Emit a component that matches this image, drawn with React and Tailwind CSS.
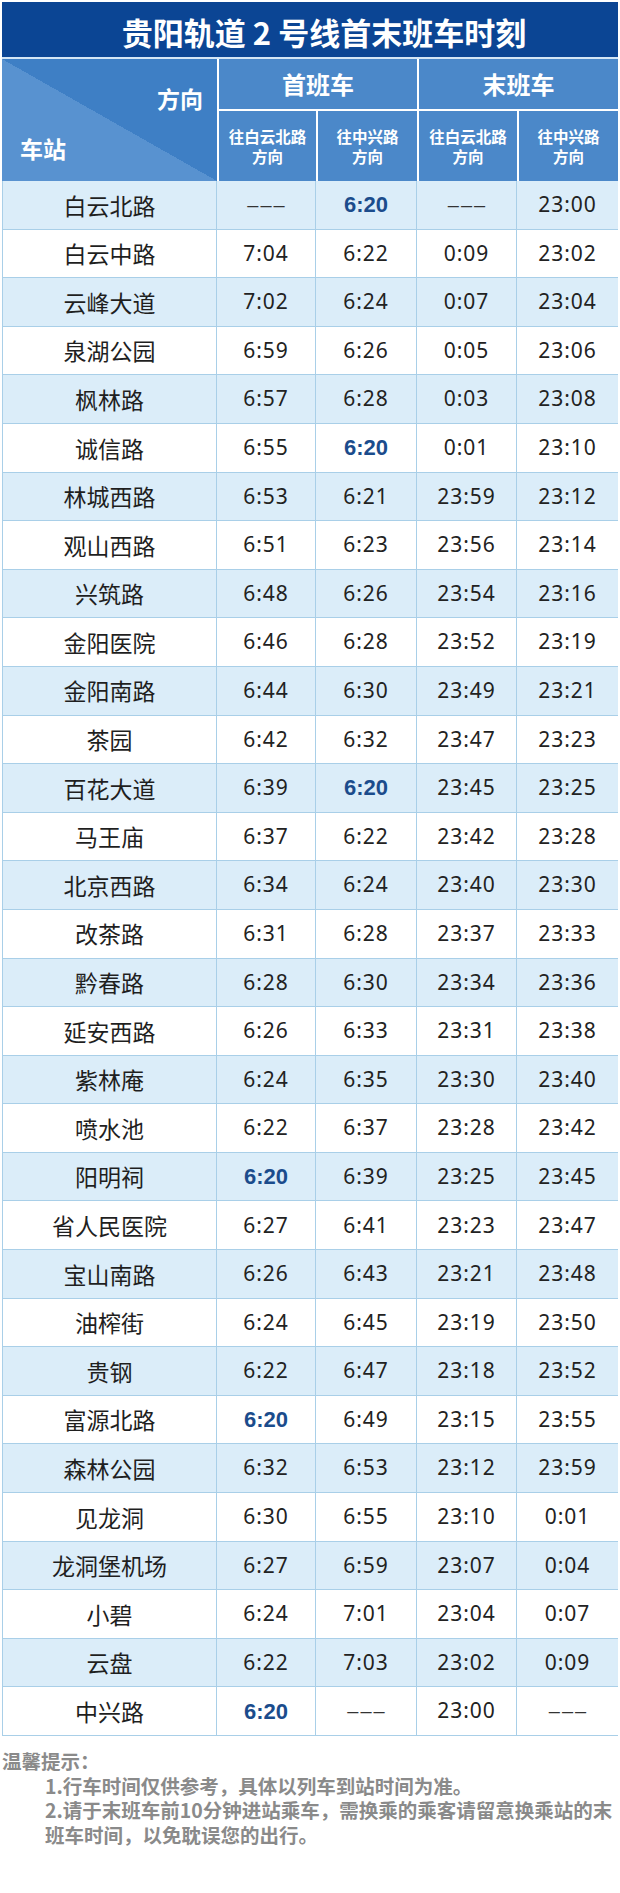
const rows = [
  ['白云北路', '---', '*6:20', '---', '23:00'],
  ['白云中路', '7:04', '6:22', '0:09', '23:02'],
  ['云峰大道', '7:02', '6:24', '0:07', '23:04'],
  ['泉湖公园', '6:59', '6:26', '0:05', '23:06'],
  ['枫林路', '6:57', '6:28', '0:03', '23:08'],
  ['诚信路', '6:55', '*6:20', '0:01', '23:10'],
  ['林城西路', '6:53', '6:21', '23:59', '23:12'],
  ['观山西路', '6:51', '6:23', '23:56', '23:14'],
  ['兴筑路', '6:48', '6:26', '23:54', '23:16'],
  ['金阳医院', '6:46', '6:28', '23:52', '23:19'],
  ['金阳南路', '6:44', '6:30', '23:49', '23:21'],
  ['茶园', '6:42', '6:32', '23:47', '23:23'],
  ['百花大道', '6:39', '*6:20', '23:45', '23:25'],
  ['马王庙', '6:37', '6:22', '23:42', '23:28'],
  ['北京西路', '6:34', '6:24', '23:40', '23:30'],
  ['改茶路', '6:31', '6:28', '23:37', '23:33'],
  ['黔春路', '6:28', '6:30', '23:34', '23:36'],
  ['延安西路', '6:26', '6:33', '23:31', '23:38'],
  ['紫林庵', '6:24', '6:35', '23:30', '23:40'],
  ['喷水池', '6:22', '6:37', '23:28', '23:42'],
  ['阳明祠', '*6:20', '6:39', '23:25', '23:45'],
  ['省人民医院', '6:27', '6:41', '23:23', '23:47'],
  ['宝山南路', '6:26', '6:43', '23:21', '23:48'],
  ['油榨街', '6:24', '6:45', '23:19', '23:50'],
  ['贵钢', '6:22', '6:47', '23:18', '23:52'],
  ['富源北路', '*6:20', '6:49', '23:15', '23:55'],
  ['森林公园', '6:32', '6:53', '23:12', '23:59'],
  ['见龙洞', '6:30', '6:55', '23:10', '0:01'],
  ['龙洞堡机场', '6:27', '6:59', '23:07', '0:04'],
  ['小碧', '6:24', '7:01', '23:04', '0:07'],
  ['云盘', '6:22', '7:03', '23:02', '0:09'],
  ['中兴路', '*6:20', '---', '23:00', '---'],
]

const TimeCell = ({ v, last }) => {
  const edge = last ? '' : 'border-r border-[#a9cfe8]'
  if (v === '---') {
    return (
      <div className={`flex items-center justify-center ${edge}`}>
        <span className="font-['Liberation_Sans',sans-serif] text-[20px] text-[#333] tracking-[2px] pl-[2px]">–––</span>
      </div>
    )
  }
  if (v.startsWith('*')) {
    return (
      <div className={`flex items-center justify-center ${edge}`}>
        <span className="font-['Liberation_Sans',sans-serif] font-bold text-[22px] text-[#1b4c8c]">{v.slice(1)}</span>
      </div>
    )
  }
  return (
    <div className={`flex items-center justify-center ${edge}`}>
      <span className="font-['Noto_Sans',sans-serif] text-[21px] tracking-[1px] text-[#222]">{v}</span>
    </div>
  )
}

const SubHead = ({ a }) => (
  <div className="bg-[#4b88c9] flex flex-col items-center justify-center text-white font-bold text-[15.5px] leading-[20px]">
    <span>{a}</span>
    <span>方向</span>
  </div>
)

export default function App() {
  return (
    <div className="w-[620px] bg-white pt-[2px] pb-[40px] font-['Noto_Sans_CJK_SC','Noto_Sans',sans-serif]">
      <div className="ml-[2px] w-[616px]">
        <div className="h-[55px] bg-[#0b4594] flex items-center justify-center pl-[28px] pt-[4px]">
          <h1 className="text-white font-bold text-[31px] leading-none">贵阳轨道 2 号线首末班车时刻</h1>
        </div>
        <div className="h-[2px] bg-[#d4e6f6]"></div>
        <div className="grid grid-cols-[215px_97px_99px_98px_99px] grid-rows-[50px_70px] gap-[2px] bg-white">
          <div className="row-span-2 flex flex-col justify-between pt-[24px] pb-[18px] px-[14px] bg-[linear-gradient(to_top_right,#5892d0_50%,#3e7fc5_50%)] text-white font-bold text-[23px] leading-[30px]">
            <span className="text-right">方向</span>
            <span className="text-left pl-[4px]">车站</span>
          </div>
          <div className="col-span-2 bg-[#4b88c9] flex items-center justify-center text-white font-bold text-[24px]">首班车</div>
          <div className="col-span-2 bg-[#4b88c9] flex items-center justify-center text-white font-bold text-[24px]">末班车</div>
          <SubHead a="往白云北路" />
          <SubHead a="往中兴路" />
          <SubHead a="往白云北路" />
          <SubHead a="往中兴路" />
        </div>
        <div className="border-l border-[#a9cfe8]">
          {rows.map((r, i) => (
            <div
              key={r[0]}
              className={`grid grid-cols-[214px_99px_101px_100px_101px] h-[48.6px] border-b border-[#a9cfe8] ${i % 2 === 0 ? 'bg-[#dbedf9]' : 'bg-white'}`}
            >
              <div className="flex items-center justify-center border-r border-[#a9cfe8] text-[23px] text-[#1f1f1f]">{r[0]}</div>
              <TimeCell v={r[1]} />
              <TimeCell v={r[2]} />
              <TimeCell v={r[3]} />
              <TimeCell v={r[4]} last />
            </div>
          ))}
        </div>
      </div>
      <div className="mt-[13px] text-[19.5px] leading-[24.5px] font-bold text-[#8a8a8a]">
        <p className="pl-[2px]">温馨提示：</p>
        <p className="pl-[45px] whitespace-nowrap">1.行车时间仅供参考，具体以列车到站时间为准。</p>
        <p className="pl-[45px] whitespace-nowrap">2.请于末班车前10分钟进站乘车，需换乘的乘客请留意换乘站的末</p>
        <p className="pl-[45px] whitespace-nowrap">班车时间，以免耽误您的出行。</p>
      </div>
    </div>
  )
}
